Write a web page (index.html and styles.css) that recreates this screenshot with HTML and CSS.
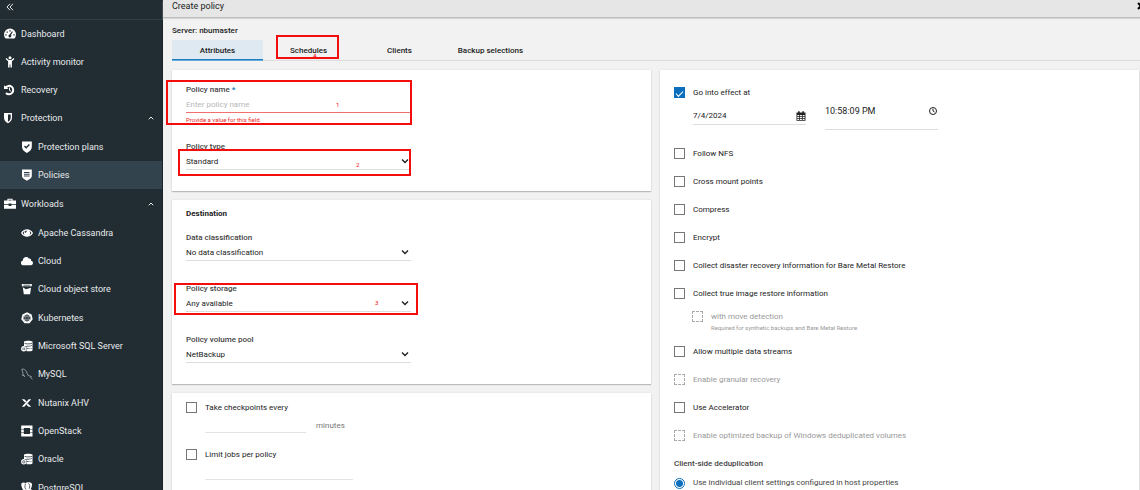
FILE: index.html
```html
<!DOCTYPE html>
<html lang="en">
<head>
<meta charset="utf-8">
<title>Create policy</title>
<link rel="stylesheet" href="styles.css">
</head>
<body>
<div class="app">
<nav class="sidebar" aria-label="Main">
  <button class="collapse" type="button" aria-label="Collapse menu"><svg class="collapse-icon" viewBox="0 0 8 8"><path d="M4 .8 1 4l3 3.2M7 .8 4 4l3 3.2"/></svg></button>
  <ul class="menu">
    <li><a class="item" href="#"><svg class="icon" viewBox="0 0 12 12"><path fill-rule="evenodd" d="M1.6 10.5A6 6 0 1 1 10.4 10.5ZM5.3 2.2v1.4h1.4V2.2ZM2.5 3.4v1.3h1.3V3.4ZM1.3 6.3v1.3h1.3V6.3ZM9.4 6.3v1.3h1.3V6.3ZM8 3.2 5.7 6.6a1.4 1.4 0 1 0 1.3.5L8.8 3.7Z"/></svg>Dashboard</a></li>
    <li><a class="item" href="#"><svg class="icon" viewBox="0 0 12 12"><circle cx="6" cy="1.8" r="1.5"/><path d="M2.4 2.1 4.7 4h2.6l2.3-1.9.8.9-2.5 2.3v6.2H6.4V8.4h-.8v3.1H4.1V5.3L1.6 3Z"/></svg>Activity monitor</a></li>
    <li><a class="item" href="#"><svg class="icon" viewBox="0 0 12 12"><path class="thick" d="M1.6 3.6A4.2 4.2 0 1 1 2 9"/><path d="M0 1.2 4.5 5H0Z"/><path class="line" d="M5.5 3.6v2.7l1.7 1"/></svg>Recovery</a></li>
    <li>
      <a class="item" href="#"><svg class="icon" viewBox="0 0 12 12"><path fill-rule="evenodd" d="M0 1h8v4.500c0 2.800-1.600 4.600-4 5.700C1.600 10.100 0 8.300 0 5.500ZM4 2.400v7.300C5.700 8.700 6.700 7.400 6.700 5.500V2.400Z"/></svg>Protection<svg class="caret" viewBox="0 0 6 4"><path d="M.7 3.300 3 1l2.300 2.300"/></svg></a>
      <ul class="submenu">
        <li><a class="item" href="#"><svg class="icon" viewBox="0 0 12 12"><path fill-rule="evenodd" d="M1 .5h9.800v5.500c0 2.500-2.200 4.800-4.900 5.900C3.200 10.800 1 8.500 1 6ZM3 5.600l2.200 2.200 3.700-3.700-1-1-2.700 2.700L4 4.600Z"/></svg>Protection plans</a></li>
        <li><a class="item active" href="#" aria-current="page"><svg class="icon" viewBox="0 0 12 12"><path fill-rule="evenodd" d="M1 .5h9.800v6.800c0 1.800-2.700 3.100-4.900 4.400C3.600 10.400 1 9.100 1 7.300ZM3 3v1h5.600V3ZM3 4.800v1h5.600v-1ZM3 6.600v1h5.600v-1Z"/></svg>Policies</a></li>
      </ul>
    </li>
    <li>
      <a class="item" href="#"><svg class="icon" viewBox="0 0 12 12"><path fill-rule="evenodd" d="M0 2.500h3.400V.8h5.200v1.700H12v3.700H7.400v-.7H4.600v.7H0ZM4.500 1.800v.7h3v-.7Z"/><path d="M0 7h4.600v1h2.800V7H12v3.800H0Z"/></svg>Workloads<svg class="caret" viewBox="0 0 6 4"><path d="M.7 3.300 3 1l2.300 2.300"/></svg></a>
      <ul class="submenu">
        <li><a class="item" href="#"><svg class="icon" viewBox="0 0 12 12"><path fill-rule="evenodd" d="M0 6c2.600-5 9.400-5 12 0-2.600 5-9.400 5-12 0ZM1.500 6c.6 1 1.400 1.800 2.400 2.300a3.300 3.300 0 0 1 0-4.600C2.900 4.200 2.100 5 1.500 6ZM10.500 6c-.6-1-1.400-1.800-2.400-2.300a3.300 3.300 0 0 1 0 4.600c1-.5 1.800-1.300 2.400-2.300ZM5.800 3.500A2.100 2.100 0 0 0 3.900 6h.8c0-1 .4-1.500 1.100-1.600Z"/></svg>Apache Cassandra</a></li>
        <li><a class="item" href="#"><svg class="icon" viewBox="0 0 12 12"><path d="M2.500 10.300C-.8 10.100-.7 6.200 1.700 5.800 1.600 2.300 6 .6 7.700 3.600c1.500-.5 2.700.6 2.400 2.200 2.600.5 2.500 4.300-.2 4.500Z"/></svg>Cloud</a></li>
        <li><a class="item" href="#"><svg class="icon" viewBox="0 0 12 12"><path fill-rule="evenodd" d="M.8 1h10v2.300H.8ZM2.400 1.800v.6h6.800v-.6Z"/><path d="M1.800 4.200 5 6.200l5-1.500-.9 6.500H2.800Z"/></svg>Cloud object store</a></li>
        <li><a class="item" href="#"><svg class="icon" viewBox="0 0 12 12"><path d="m6 .2 4.600 2.200 1.100 4.800-3.200 4H3.500l-3.200-4 1.100-4.800Z"/><g class="cut"><circle cx="6" cy="6" r="2.600"/><path d="M6 1.900v8M2 5l8 2M10 5 2 7M3.800 9.300l4.400-6.400M8.200 9.300 3.800 2.900"/></g></svg>Kubernetes</a></li>
        <li><a class="item" href="#"><svg class="icon" viewBox="0 0 12 12"><path fill-rule="evenodd" d="M3 1.500C4.500.5 10 .5 11.500 1.500v9c-1.500 1-4 1-6 .7V6H3ZM3.600 3v.7c2 .7 5 .7 7.300 0V3c-2.300.7-5.300.7-7.300 0ZM5.500 5.700v.6c2 .3 3.700.2 5.400-.3v-.7c-1.700.5-3.400.6-5.400.4ZM5.500 8.300v.6c2 .3 3.700.2 5.400-.3v-.7c-1.700.5-3.400.6-5.400.4Z"/><circle cx="2.800" cy="8.800" r="2.700"/><path class="cut" d="M2 7.500v2.600M3.700 7.500v2.600"/></svg>Microsoft SQL Server</a></li>
        <li><a class="item" href="#"><svg class="icon" viewBox="0 0 12 12"><path class="hair" d="M.8 1.200c2-.5 3.500.3 4.300 1.900l2 4.300 3.500 1.300-1.100.7 2 2M.8 1.200 2 5.300 1.800 8l.9-1.200 1 2.200"/></svg>MySQL</a></li>
        <li><a class="item" href="#"><svg class="icon" viewBox="0 0 12 12"><path d="M.8 2.200h2.600l2 2.100-1.300 1.200ZM10.200 2.200H7.700L.8 9.800h2.500ZM10.200 9.800H7.600L5.500 7.700l1.200-1.200Z"/></svg>Nutanix AHV</a></li>
        <li><a class="item" href="#"><svg class="icon" viewBox="0 0 12 12"><path d="M.2.500h11.300v4H9V3H2.800v1.500H.2ZM.2 5h2.600v2H.2ZM9 5h2.500v2H9ZM.2 7.500h2.600V9H9V7.500h2.500v4H.2Z"/></svg>OpenStack</a></li>
        <li><a class="item" href="#"><svg class="icon" viewBox="0 0 12 12"><path fill-rule="evenodd" d="M3 1.500C4.500.5 10 .5 11.500 1.500v9c-1.500 1-4 1-6 .7V6H3ZM3.600 3v.7c2 .7 5 .7 7.300 0V3c-2.300.7-5.300.7-7.300 0ZM5.500 5.700v.6c2 .3 3.700.2 5.400-.3v-.7c-1.700.5-3.400.6-5.400.4ZM5.500 8.300v.6c2 .3 3.700.2 5.400-.3v-.7c-1.700.5-3.400.6-5.400.4Z"/><circle cx="2.800" cy="8.800" r="2.700"/><circle class="cut" cx="2.800" cy="8.800" r="1.200"/></svg>Oracle</a></li>
        <li><a class="item" href="#"><svg class="icon" viewBox="0 0 12 12"><path d="M.5 1.200C2 .1 3.500.5 4.500 1 6-.1 10.500-.2 11 2c.3 2-.8 4-1.600 5.300l1.600.2c-.6 1-1.800 1-2.500.7L8.200 11c-.5 1-2.300.9-2.500 0L5.500 8 3 8.800C1.200 7.500-.3 3.300.5 1.200Z"/><path class="cut" d="M4.300 1.500 3.900 5.700 5 7.500M7.500 1.300l1.300 2-.5 3.300"/></svg>PostgreSQL</a></li>
      </ul>
    </li>
  </ul>
</nav>

<main class="main">
  <header class="topbar">
    <h1 class="title">Create policy</h1>
    <button class="close" type="button" aria-label="Close"><svg class="close-icon" viewBox="0 0 8 8"><path d="m1 1 6 6M7 1 1 7"/></svg></button>
  </header>
  <p class="server">Server: nbumaster</p>
  <div class="tabs" role="tablist">
    <button class="tab selected" type="button" role="tab" aria-selected="true">Attributes</button>
    <button class="tab" type="button" role="tab">Schedules<span class="mark mark-tab"></span><span class="step step-tab">4</span></button>
    <button class="tab" type="button" role="tab">Clients</button>
    <button class="tab" type="button" role="tab">Backup selections</button>
  </div>
  <form class="columns">
    <div class="column">
      <section class="card card-policy">
        <div class="field">
          <label class="label" for="name">Policy name <span class="required">*</span></label>
          <input class="control invalid" id="name" type="text" placeholder="Enter policy name">
          <p class="error">Provide a value for this field.</p>
          <span class="mark mark-name"></span><span class="step step-name">1</span>
        </div>
        <div class="field">
          <label class="label" for="type">Policy type</label>
          <select class="control" id="type"><option>Standard</option></select>
          <svg class="chevron" viewBox="0 0 8 6"><path d="m1 1.500 3 3 3-3"/></svg>
          <span class="mark mark-type"></span><span class="step step-type">2</span>
        </div>
      </section>
      <section class="card card-destination">
        <h2 class="heading">Destination</h2>
        <div class="field">
          <label class="label" for="class">Data classification</label>
          <select class="control" id="class"><option>No data classification</option></select>
          <svg class="chevron" viewBox="0 0 8 6"><path d="m1 1.500 3 3 3-3"/></svg>
        </div>
        <div class="field">
          <label class="label" for="storage">Policy storage</label>
          <select class="control" id="storage"><option>Any available</option></select>
          <svg class="chevron" viewBox="0 0 8 6"><path d="m1 1.500 3 3 3-3"/></svg>
          <span class="mark mark-storage"></span><span class="step step-storage">3</span>
        </div>
        <div class="field">
          <label class="label" for="pool">Policy volume pool</label>
          <select class="control" id="pool"><option>NetBackup</option></select>
          <svg class="chevron" viewBox="0 0 8 6"><path d="m1 1.500 3 3 3-3"/></svg>
        </div>
      </section>
      <section class="card card-limits">
        <div class="limit">
          <label class="check"><input class="box" type="checkbox">Take checkpoints every</label>
          <div class="amount"><input class="number" type="text" aria-label="Checkpoint interval in minutes"><span class="unit">minutes</span></div>
        </div>
        <div class="limit">
          <label class="check"><input class="box" type="checkbox">Limit jobs per policy</label>
          <div class="amount"><input class="number wide" type="text" aria-label="Job limit"></div>
        </div>
      </section>
    </div>
    <section class="card card-options">
      <label class="check"><input class="box" type="checkbox" checked>Go into effect at</label>
      <div class="when">
        <div class="date"><input class="when-input" type="text" value="7/4/2024" aria-label="Date"><button class="pick" type="button" aria-label="Pick date"><svg class="pick-icon" viewBox="0 0 10 10"><path fill-rule="evenodd" d="M.5 1.500h1.600V.2h1.600v1.300h2.600V.2h1.600v1.300h1.600v8.300h-9ZM1.300 4v1.200h1.900V4ZM4 4v1.200h1.900V4ZM6.700 4v1.200h1.900V4ZM1.300 6v1.200h1.900V6ZM4 6v1.200h1.900V6ZM6.700 6v1.200h1.900V6ZM1.300 8v1h1.900V8ZM4 8v1h1.900V8ZM6.700 8v1h1.900V8Z"/></svg></button></div>
        <div class="time"><input class="when-input" type="text" value="10:58:09 PM" aria-label="Time"><button class="pick" type="button" aria-label="Pick time"><svg class="pick-icon clock" viewBox="0 0 10 10"><circle cx="5" cy="5" r="3.500"/><path d="M5 2.700V5l1.500 1"/></svg></button></div>
      </div>
      <div class="options">
        <label class="check"><input class="box" type="checkbox">Follow NFS</label>
        <label class="check"><input class="box" type="checkbox">Cross mount points</label>
        <label class="check"><input class="box" type="checkbox">Compress</label>
        <label class="check"><input class="box" type="checkbox">Encrypt</label>
        <label class="check"><input class="box" type="checkbox">Collect disaster recovery information for Bare Metal Restore</label>
        <label class="check"><input class="box" type="checkbox">Collect true image restore information</label>
      </div>
      <div class="nested">
        <label class="check disabled"><input class="box" type="checkbox" disabled>with move detection</label>
        <p class="hint">Required for synthetic backups and Bare Metal Restore</p>
      </div>
      <div class="options">
        <label class="check"><input class="box" type="checkbox">Allow multiple data streams</label>
        <label class="check disabled"><input class="box" type="checkbox" disabled>Enable granular recovery</label>
        <label class="check"><input class="box" type="checkbox">Use Accelerator</label>
        <label class="check disabled"><input class="box" type="checkbox" disabled>Enable optimized backup of Windows deduplicated volumes</label>
      </div>
      <fieldset class="dedup">
        <legend class="legend">Client-side deduplication</legend>
        <label class="check soft"><input class="radio" type="radio" name="dedup" checked>Use individual client settings configured in host properties</label>
      </fieldset>
    </section>
  </form>
</main>
</div>
</body>
</html>
```
FILE: styles.css
```css
* { box-sizing: border-box; }
body { margin: 0; background: #f2f2f2; font: 8px/14px Roboto, sans-serif; color: #222; }
h1, h2, p, ul { margin: 0; padding: 0; }
ul { list-style: none; }
button, input, select { font: inherit; color: inherit; padding: 0; margin: 0; border: 0; background: none; border-radius: 0; outline: 0; }
svg { display: block; flex: none; }
.app { display: flex; height: 100vh; overflow: hidden; }

.sidebar { flex: none; width: 163px; background: #212c33; color: #e8eaeb; font-size: 9px; overflow: hidden; }
.collapse { display: flex; width: 100%; height: 20px; padding: 3px 6px; border-bottom: 1px solid #324049; }
.collapse-icon { width: 8px; height: 8px; fill: none; stroke: #e8eaeb; stroke-width: 1; }
.menu { border-right: 1px solid #1b242a; }
.item { display: flex; align-items: center; gap: 5px; height: 28px; padding: 0 8px 0 4px; color: inherit; text-decoration: none; }
.icon { width: 12px; height: 12px; fill: #fff; }
.caret { width: 6px; height: 4px; margin-left: auto; fill: none; stroke: #e8eaeb; }
.submenu { padding: 1px 0; }
.submenu .item { padding-left: 21px; }
.submenu li:nth-child(3n) { padding-bottom: 1px; }
.active { background: #32434e; }
.thick, .line, .hair { fill: none; stroke: #fff; }
.thick { stroke-width: 2; }
.line { stroke-width: 1; }
.hair { stroke-width: .7; stroke: #b8bec2; }
.cut { fill: none; stroke: #212c33; stroke-width: .7; }

.main { flex: 1; min-width: 0; }
.topbar { display: flex; justify-content: space-between; height: 18px; padding-left: 9px; background: #e6e6e6; border-bottom: 1px solid #bdbdbd; box-shadow: 0 1px 1px #d8d8d8; overflow: hidden; }
.title { font-size: 9px; line-height: 12px; font-weight: 400; }
.close { width: 3px; height: 12px; overflow: hidden; }
.close-icon { width: 8px; height: 8px; stroke: #000; stroke-width: 2; }
.server { margin-top: 6px; padding-left: 9px; font-weight: 500; }
.tabs { display: flex; height: 21px; margin: 2px 0 9px 9px; border-bottom: 1px solid #ddd; }
.tab { position: relative; width: 91px; height: 20px; padding-top: 2px; font-weight: 500; white-space: nowrap; }
.selected { background: #dfe9f2; border-bottom: 1px solid #1c7fc4; box-shadow: 0 1px #6ba9d6; }
.columns { display: grid; grid-template-columns: 1fr 1fr; gap: 9px; padding: 0 1px 0 9px; }
.column { display: flex; flex-direction: column; gap: 9px; min-width: 0; }
.card { background: #fff; padding-left: 14px; box-shadow: 0 1px 1px #bbb, 0 0 2px #ddd; }
.card-policy { display: flex; flex-direction: column; gap: 12px; padding-top: 12px; padding-bottom: 21px; }
.card-destination { display: flex; flex-direction: column; gap: 20px; padding-top: 7px; padding-bottom: 21px; }
.card-limits { display: flex; flex-direction: column; gap: 15px; padding-top: 8px; padding-bottom: 20px; }
.card-options { padding-top: 16px; padding-bottom: 20px; }
.heading { margin-bottom: -11px; font-size: 8px; line-height: 14px; font-weight: 700; }
.field { position: relative; width: 225px; }
.label { display: block; height: 14px; line-height: 16px; color: #444; font-weight: 500; }
.required { color: #1c7fc4; font-weight: 700; }
.control { display: block; width: 100%; height: 17px; padding-top: 1px; border-bottom: 1px solid #ddd; appearance: none; }
.control::placeholder { color: #b8b8b8; opacity: 1; }
.invalid { border-bottom-color: #f26f6f; }
.error { color: #e22; font-size: 6px; }
.chevron { position: absolute; right: 2px; top: 19px; width: 8px; height: 6px; fill: none; stroke: #222; stroke-width: 1.4; pointer-events: none; }

.mark { position: absolute; border: 2px solid #f30d0d; pointer-events: none; }
.mark-tab { left: 13px; top: -5px; width: 63px; height: 24px; }
.mark-name { left: -20px; top: -2px; width: 246px; height: 45px; }
.mark-type { left: -8px; top: 10px; width: 233px; height: 27px; }
.mark-storage { left: -12px; top: 2px; width: 244px; height: 32px; }
.step { position: absolute; color: #f30d0d; font-size: 6px; line-height: 8px; }
.step-tab { left: 50px; top: 12px; }
.step-name { left: 150px; top: 19px; }
.step-type { left: 170px; top: 22px; }
.step-storage { left: 189px; top: 18px; }

.check { display: flex; align-items: center; gap: 8px; }
.box { appearance: none; flex: none; width: 11px; height: 11px; margin-bottom: 1px; border: 1px solid #777; background: #fff; }
.box:checked { display: grid; place-items: center; background: #0b6fbd; border-color: #0b6fbd; }
.box:checked::after { content: ""; width: 6px; height: 3px; border: solid #fff; border-width: 0 0 1px 1px; rotate: -45deg; }
.box:disabled { border: 1px dashed #aaa; }
.disabled { color: #999; }
.soft { color: #444; }
.amount { display: flex; gap: 10px; margin: 4px 0 0 19px; }
.number { width: 101px; height: 14px; border-bottom: 1px solid #e3e3e3; }
.wide { width: 148px; }
.unit { color: #777; }
.when { display: flex; gap: 19px; padding-left: 19px; }
.date, .time { display: flex; align-items: center; width: 113px; border-bottom: 1px solid #ddd; }
.date { height: 17px; margin-top: 8px; font-size: 8px; }
.time { height: 27px; margin-top: 3px; padding-bottom: 10px; font-size: 9px; }
.when-input { flex: 1; min-width: 0; }
.pick-icon { width: 10px; height: 10px; fill: #222; }
.clock { fill: none; stroke: #222; stroke-width: 1; }
.options { display: flex; flex-direction: column; gap: 14px; }
.when + .options { margin-top: 17px; }
.nested { margin: 9px 0 13px 18px; }
.hint { padding-left: 19px; color: #999; font-size: 6px; line-height: 8px; }
.dedup { margin: 14px 0 0; padding: 0; border: 0; }
.legend { padding: 0; margin-bottom: 5px; color: #444; font-weight: 500; }
.radio { appearance: none; flex: none; width: 11px; height: 11px; border: 1px solid #0b6fbd; border-radius: 50%; background: radial-gradient(circle, #0b6fbd 3px, #fff 4px); }
```
